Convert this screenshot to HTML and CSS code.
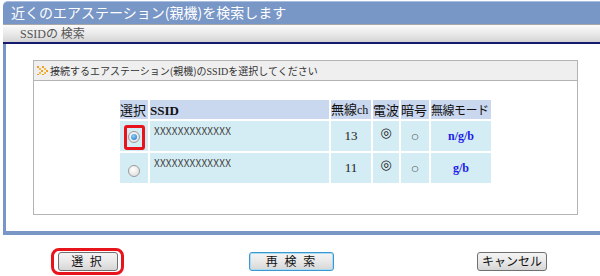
FILE: index.html
```html
<!DOCTYPE html>
<html lang="ja">
<head>
    <meta charset="UTF-8">
    <title>近くのエアステーション(親機)を検索します</title>
    <link rel="stylesheet" href="styles.css">
</head>
<body>
    <div class="panel">
        <div class="panel-title">近くのエアステーション(親機)を検索します</div>
        <div class="panel-sub"><span class="latin">SSID</span>の 検索</div>
        <div class="panel-body">
            <div class="box">
                <div class="box-head">
                    <svg class="chev" width="11" height="9" viewBox="0 0 11 9">
                        <rect x="0" y="0" width="2" height="2" fill="#f0a020"/>
                        <rect x="2" y="2" width="2" height="2" fill="#f7b840"/>
                        <rect x="4" y="4" width="2" height="2" fill="#f0a020"/>
                        <rect x="2" y="6" width="2" height="2" fill="#f7b840"/>
                        <rect x="0" y="8" width="2" height="1" fill="#f0a020"/>
                        <rect x="5" y="0" width="2" height="2" fill="#f0a020"/>
                        <rect x="7" y="2" width="2" height="2" fill="#f7b840"/>
                        <rect x="9" y="4" width="2" height="2" fill="#f0a020"/>
                        <rect x="7" y="6" width="2" height="2" fill="#f7b840"/>
                        <rect x="5" y="8" width="2" height="1" fill="#f0a020"/>
                    </svg>
                    <span>接続するエアステーション(親機)の<span class="latin">SSID</span>を選択してください</span>
                </div>
                <table class="ap-list">
                    <thead>
                        <tr>
                            <th class="c-sel">選択</th>
                            <th class="c-ssid"><span class="latin bold">SSID</span></th>
                            <th class="c-ch">無線<span class="latin">ch</span></th>
                            <th class="c-sig">電波</th>
                            <th class="c-enc">暗号</th>
                            <th class="c-mode">無線モード</th>
                        </tr>
                    </thead>
                    <tbody>
                        <tr>
                            <td class="c-sel"><span class="mark"><span class="radio checked"></span></span></td>
                            <td class="c-ssid">XXXXXXXXXXXXX</td>
                            <td class="c-ch">13</td>
                            <td class="c-sig">◎</td>
                            <td class="c-enc">○</td>
                            <td class="c-mode">n/g/b</td>
                        </tr>
                        <tr>
                            <td class="c-sel"><span class="radio"></span></td>
                            <td class="c-ssid">XXXXXXXXXXXXX</td>
                            <td class="c-ch">11</td>
                            <td class="c-sig">◎</td>
                            <td class="c-enc">○</td>
                            <td class="c-mode">g/b</td>
                        </tr>
                    </tbody>
                </table>
            </div>
        </div>
    </div>
    <div class="actions">
        <span class="mark-btn"><button class="btn btn-select">選 択</button></span>
        <button class="btn btn-search">再 検 索</button>
        <button class="btn btn-cancel">キャンセル</button>
    </div>
</body>
</html>
```

FILE: styles.css
```css
* {
    margin: 0;
    padding: 0;
    box-sizing: border-box;
}

body {
    font-family: "Noto Sans CJK JP", sans-serif;
    background-color: #fff;
    width: 600px;
    height: 276px;
    overflow: hidden;
}

.latin {
    font-family: "Liberation Serif", "Noto Sans CJK JP", serif;
}

.bold {
    font-weight: bold;
}

.panel {
    margin: 1px 0 0 3px;
    width: 610px;
    background-color: #7896c6;
    border-top: 1px solid #a9bde0;
    border-radius: 5px 0 0 0;
    padding: 0 0 4px 3px;
}

.panel-title {
    height: 22px;
    line-height: 21px;
    color: #fff;
    font-size: 14px;
    padding-left: 8px;
    margin-left: -3px;
}

.panel-sub {
    height: 20px;
    border-top: 1px solid #a8a8a8;
    border-bottom: 2px solid #151a6e;
    background: linear-gradient(#fbfbfb, #e6e6e6 60%, #d4d4d4);
    color: #555;
    font-size: 12px;
    line-height: 16px;
    margin-left: -3px;
    padding-left: 17px;
}

.panel-body {
    background-color: #fff;
    height: 187px;
    padding: 16px 0 0 27px;
}

.box {
    width: 545px;
    height: 155px;
    border: 1px solid #b4b4b4;
}

.box-head {
    height: 20px;
    background-color: #efefef;
    border-bottom: 1px solid #b4b4b4;
    display: flex;
    align-items: center;
    gap: 2px;
    padding-left: 3px;
    font-size: 10px;
    color: #333;
}

.chev {
    display: block;
}

.ap-list {
    border-collapse: separate;
    border-spacing: 2px;
    margin: 17px 0 0 84px;
    table-layout: fixed;
}

.ap-list th {
    background-color: #c9d7ef;
    font-weight: normal;
    font-size: 13px;
    height: 17px;
    line-height: 17px;
    color: #111;
    text-align: left;
    padding: 0;
    white-space: nowrap;
    overflow: hidden;
}

.ap-list th.c-mode {
    font-size: 12px;
    letter-spacing: -0.5px;
}

.ap-list th.c-ch .latin {
    font-size: 12px;
}

.ap-list td {
    background-color: #d4ecf3;
    height: 30px;
    font-size: 12px;
    color: #222;
    text-align: center;
    white-space: nowrap;
}

.c-sel { width: 28px; }
.c-ssid { width: 179px; }
.c-ch { width: 40px; }
.c-sig { width: 26px; }
.c-enc { width: 28px; }
.c-mode { width: 60px; }

.ap-list td.c-sel {
    padding-top: 2px;
}

.ap-list td.c-ssid {
    text-align: left;
    vertical-align: top;
    font-size: 10px;
    color: #444;
    padding: 2px 0 0 4px;
    letter-spacing: 0.2px;
}

.ap-list td.c-ch {
    font-family: "Liberation Serif", serif;
    font-size: 13px;
}

.ap-list td.c-sig {
    font-family: "DejaVu Sans", sans-serif;
    font-size: 13px;
    vertical-align: top;
    padding-top: 4px;
    color: #222;
}

.ap-list td.c-enc {
    font-family: "DejaVu Sans", sans-serif;
    font-size: 8px;
    color: #222;
}

.ap-list td.c-mode {
    font-family: "Liberation Serif", serif;
    font-weight: bold;
    color: #1d1de8;
    font-size: 12px;
}

.radio {
    display: inline-block;
    width: 12px;
    height: 12px;
    border-radius: 50%;
    border: 1px solid #9a9a9a;
    background: radial-gradient(circle at 40% 35%, #fff, #e4e4e4 70%, #cfcfcf);
    vertical-align: middle;
    position: relative;
}

.radio.checked::after {
    content: "";
    position: absolute;
    left: 2px;
    top: 2px;
    width: 6px;
    height: 6px;
    border-radius: 50%;
    background: radial-gradient(circle at 40% 35%, #8ed0ff, #1a6fc0);
}

.mark {
    display: inline-flex;
    align-items: center;
    justify-content: center;
    width: 21px;
    height: 25px;
    border: 3px solid #e8141c;
    border-radius: 3px;
}

.actions {
    display: flex;
    align-items: center;
    margin-top: 12px;
    padding-left: 51px;
    height: 28px;
}

.mark-btn {
    display: inline-flex;
    align-items: center;
    justify-content: center;
    width: 73px;
    height: 27px;
    border: 3px solid #e8141c;
    border-radius: 8px;
}

.btn {
    font-family: "Noto Sans CJK JP", sans-serif;
    font-size: 12px;
    color: #111;
    height: 19px;
    line-height: 16px;
    border: 1px solid #707070;
    border-radius: 3px;
    background: linear-gradient(#f4f4f4, #e8e8e8 50%, #d6d6d6);
}

.btn-select {
    width: 60px;
    letter-spacing: 2px;
}

.btn-search {
    width: 85px;
    margin-left: 125px;
    letter-spacing: 2px;
    border-color: #3c96d0;
    box-shadow: inset 0 0 0 1px #a8dcf5;
}

.btn-cancel {
    width: 70px;
    margin-left: 143px;
}
```
